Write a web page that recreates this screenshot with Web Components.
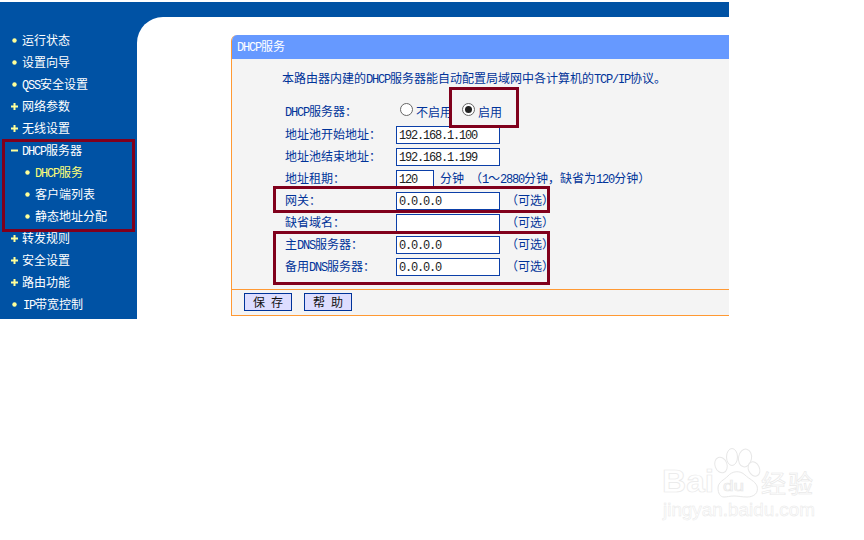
<!DOCTYPE html>
<html lang="zh"><head><meta charset="utf-8"><title>DHCP服务</title>
<style>
html,body{margin:0;padding:0;background:#fff;overflow:hidden}
body{width:864px;height:540px;position:relative;font:12px/22px "Noto Sans CJK SC","Liberation Sans",sans-serif}
</style></head><body>
<tp-app>
  <tp-menu slot="menu">
    <tp-item icon="dot" label="运行状态"></tp-item>
    <tp-item icon="dot" label="设置向导"></tp-item>
    <tp-item icon="dot" label="QSS安全设置"></tp-item>
    <tp-item icon="plus" label="网络参数"></tp-item>
    <tp-item icon="plus" label="无线设置"></tp-item>
    <tp-item icon="minus" label="DHCP服务器"></tp-item>
    <tp-item icon="dot" sub active label="DHCP服务"></tp-item>
    <tp-item icon="dot" sub label="客户端列表"></tp-item>
    <tp-item icon="dot" sub label="静态地址分配"></tp-item>
    <tp-item icon="plus" label="转发规则"></tp-item>
    <tp-item icon="plus" label="安全设置"></tp-item>
    <tp-item icon="plus" label="路由功能"></tp-item>
    <tp-item icon="dot" label="IP带宽控制"></tp-item>
  </tp-menu>
  <tp-panel title="DHCP服务" intro="本路由器内建的DHCP服务器能自动配置局域网中各计算机的TCP/IP协议。">
    <tp-row first label="DHCP服务器：">
      <tp-radio label="不启用"></tp-radio>
      <tp-radio checked label="启用"></tp-radio>
    </tp-row>
    <tp-row label="地址池开始地址："><tp-field value="192.168.1.100"></tp-field></tp-row>
    <tp-row label="地址池结束地址："><tp-field value="192.168.1.199"></tp-field></tp-row>
    <tp-row label="地址租期："><tp-field narrow value="120"></tp-field><tp-note text="分钟 （1～2880分钟，缺省为120分钟）"></tp-note></tp-row>
    <tp-row label="网关："><tp-field value="0.0.0.0"></tp-field><tp-note text="（可选）"></tp-note></tp-row>
    <tp-row label="缺省域名："><tp-field value=""></tp-field><tp-note text="（可选）"></tp-note></tp-row>
    <tp-row label="主DNS服务器："><tp-field value="0.0.0.0"></tp-field><tp-note text="（可选）"></tp-note></tp-row>
    <tp-row label="备用DNS服务器："><tp-field value="0.0.0.0"></tp-field><tp-note text="（可选）"></tp-note></tp-row>
    <tp-button slot="actions" label="保 存"></tp-button>
    <tp-button slot="actions" label="帮 助"></tp-button>
  </tp-panel>
</tp-app>
<red-box x="2" y="139" w="133" h="93"></red-box>
<red-box x="449" y="87" w="70" h="41"></red-box>
<red-box x="273" y="186" w="277" h="27"></red-box>
<red-box x="273" y="231" w="277" h="54"></red-box>
<bd-mark></bd-mark>
<script>
const esc=s=>s.replace(/&/g,'&amp;').replace(/</g,'&lt;');
const lat=s=>esc(s).replace(/[\x20-\x7e]+/g,m=>`<span class="l">${m}</span>`);
const LAT='.l{font-family:"Liberation Mono",monospace;font-size:12px;letter-spacing:-1.2px;line-height:1}';
class Base extends HTMLElement{
  connectedCallback(){
    if(this.shadowRoot)return;
    this.attachShadow({mode:'open'}).innerHTML=this.render();
  }
  a(n){return this.getAttribute(n)||''}
}
customElements.define('tp-app',class extends Base{render(){return `<style>
:host{display:block;width:729px;height:317px;margin-top:2px;background:#0052a4;overflow:hidden}
.top{height:15px}
.body{display:flex;height:302px}
.side{width:137px;flex:none}
.main{flex:1;min-width:0;background:#fff;border-top-left-radius:26px;padding:18px 0 0 94px;overflow:hidden}
</style><div class="top"></div><div class="body"><div class="side"><slot name="menu"></slot></div><div class="main"><slot></slot></div></div>`}});
customElements.define('tp-menu',class extends Base{render(){return `<style>
:host{display:block;padding-top:12px}
</style><slot></slot>`}});
customElements.define('tp-item',class extends Base{render(){
  const ic=this.a('icon'),sub=this.hasAttribute('sub'),act=this.hasAttribute('active');
  const svg={dot:'<circle cx="3.5" cy="3.5" r="2.2"/>',plus:'<path d="M2.5 0h2v2.500h2.500v2h-2.500v2.500h-2v-2.500h-2.500v-2h2.500z"/>',minus:'<rect x="0" y="2.500" width="7" height="2"/>'}[ic];
  return `<style>
:host{display:flex;align-items:center;height:22px;color:${act?'#ffff77':'#fff'};padding-left:${sub?'24px':'11px'};font-size:12px;line-height:22px;white-space:nowrap}
svg{width:7px;height:7px;fill:#ffff99;flex:none;margin-right:${ic==='dot'&&!sub&&this.a('label').startsWith('IP')?'5px':'4px'}}
${LAT}
</style><svg viewBox="0 0 7 7">${svg}</svg><span>${lat(this.a('label'))}</span>`}});
customElements.define('tp-panel',class extends Base{render(){return `<style>
:host{display:block;width:498px;height:281px;box-sizing:border-box;background:#f4f4f4;border-left:1px solid #ff9933;border-bottom:1px solid #ff9933;border-top-left-radius:6px;overflow:hidden;color:#003399;font-size:12px;line-height:22px}
.head{height:24px;line-height:22px;background:#6699ff;color:#fff;padding-left:5px}
.intro{padding:8px 0 0 50px;height:22px;margin-bottom:10px;white-space:nowrap}
.form{height:190px;padding-left:53px}
.foot{border-top:1px solid #ff9933;height:26px;display:flex;gap:12px;padding:3px 0 0 12px;box-sizing:border-box}
${LAT}
</style><div class="head">${lat(this.a('title'))}</div><div class="intro">${lat(this.a('intro'))}</div><div class="form"><slot></slot></div><div class="foot"><slot name="actions"></slot></div>`}});
customElements.define('tp-row',class extends Base{render(){return `<style>
:host{display:grid;grid-template-columns:111px 1fr;grid-template-rows:100%;align-items:center;height:${this.hasAttribute('first')?24:22}px;white-space:nowrap}
.c{display:flex;align-items:center;gap:6px;height:100%}
${LAT}
</style><div>${lat(this.a('label'))}</div><div class="c"><slot></slot></div>`}});
customElements.define('tp-field',class extends Base{render(){return `<style>
:host{display:block;box-sizing:border-box;width:${this.hasAttribute('narrow')?38:104}px;height:18px;margin-top:1px;background:#fff;border:1px solid #0b3fa8;color:#222;padding-left:2px;line-height:14px;flex:none}
.l{font-family:"Liberation Mono",monospace;font-size:12px;letter-spacing:-1.2px}
</style><span class="l">${esc(this.a('value'))}</span>`}});
customElements.define('tp-note',class extends Base{render(){return `<style>
:host{display:block;color:#003399}
${LAT}
</style>${lat(this.a('text'))}`}});
customElements.define('tp-radio',class extends Base{render(){const c=this.hasAttribute('checked');return `<style>
:host{display:flex;align-items:flex-start;margin-left:4px;height:24px;color:#003399}
.r{box-sizing:border-box;width:13px;height:13px;border-radius:50%;border:1px solid #666;background:#fff;margin-top:4px;display:flex;align-items:center;justify-content:center}
.r i{width:7px;height:7px;border-radius:50%;background:#222;display:${c?'block':'none'}}
.t{margin:2px 0 0 3px}
</style><span class="r"><i></i></span><span class="t">${this.a('label')}</span>`}});
customElements.define('tp-button',class extends Base{render(){return `<style>
:host{display:flex;align-items:center;justify-content:center;box-sizing:border-box;width:48px;height:18px;background:#ddddff;border:1px solid #003399;color:#111;font-size:12px;white-space:pre}
${LAT}
</style><span>${lat(this.a('label'))}</span>`}});
customElements.define('red-box',class extends Base{render(){return `<style>
:host{position:absolute;left:${this.a('x')}px;top:${this.a('y')}px;width:${this.a('w')}px;height:${this.a('h')}px;box-sizing:border-box;border:3px solid #80001c;pointer-events:none}
</style>`}});
customElements.define('bd-mark',class extends Base{render(){return `<style>
:host{position:absolute;left:650px;top:430px;width:214px;height:110px;opacity:.75}
svg{display:block}
text{fill:#fff;stroke:#e2e2e2;stroke-width:.7px;font-family:"Liberation Sans",sans-serif}
.p{fill:#fff;stroke:#e0e0e0;stroke-width:1}
</style><svg width="214" height="110" viewBox="0 0 214 110">
<text x="12" y="62" font-size="31" font-weight="700" textLength="52" lengthAdjust="spacingAndGlyphs">Bai</text>
<ellipse class="p" cx="71" cy="35" rx="6" ry="8" transform="rotate(-20 71 35)"/>
<ellipse class="p" cx="82" cy="27" rx="5.500" ry="8.500"/>
<ellipse class="p" cx="95" cy="28" rx="6.500" ry="9" transform="rotate(10 95 28)"/>
<ellipse class="p" cx="104" cy="39" rx="5.500" ry="7.500" transform="rotate(-25 104 39)"/>
<path class="p" d="M68 58c0-6 6-8 10-12 4-5 12-6 17-1 4 4 10 6 12 11 2 7-3 11-10 11-5 0-9-1-13-1s-7 1-10 1c-4 0-6-4-6-9z"/>
<text x="73" y="61" font-size="14" textLength="21" lengthAdjust="spacingAndGlyphs">du</text>
<text x="111" y="63" font-size="25" textLength="52" style="font-family:'Noto Sans CJK SC',sans-serif">经验</text>
<text x="13" y="86" font-size="18" textLength="152" lengthAdjust="spacingAndGlyphs" style="stroke-width:.5px">jingyan.baidu.com</text>
</svg>`}});
</script>
</body></html>
